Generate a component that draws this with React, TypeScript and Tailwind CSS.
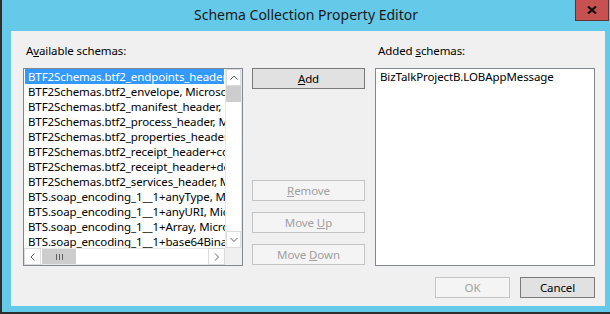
import React from 'react';

const available = [
    "BTF2Schemas.btf2_endpoints_header, Microsoft.XLANGs.BaseTypes",
    "BTF2Schemas.btf2_envelope, Microsoft.XLANGs.BaseTypes",
    "BTF2Schemas.btf2_manifest_header, Microsoft.XLANGs.BaseTypes",
    "BTF2Schemas.btf2_process_header, Microsoft.XLANGs.BaseTypes",
    "BTF2Schemas.btf2_properties_header, Microsoft.XLANGs.BaseTypes",
    "BTF2Schemas.btf2_receipt_header+commitmentReceipt, Microsoft",
    "BTF2Schemas.btf2_receipt_header+deliveryReceipt, Microsoft",
    "BTF2Schemas.btf2_services_header, Microsoft.XLANGs.BaseTypes",
    "BTS.soap_encoding_1__1+anyType, Microsoft.XLANGs.BaseTypes",
    "BTS.soap_encoding_1__1+anyURI, Microsoft.XLANGs.BaseTypes",
    "BTS.soap_encoding_1__1+Array, Microsoft.XLANGs.BaseTypes",
    "BTS.soap_encoding_1__1+base64Binary, Microsoft.XLANGs.BaseTypes",
];

const added = ["BizTalkProjectB.LOBAppMessage"];

function Chevron({dir}: { dir: "up" | "down" | "left" | "right" }) {
    const pts = {
        up: "0.5,4.5 4,1 7.5,4.5",
        down: "0.5,1 4,4.5 7.5,1",
        left: "4.5,0.5 1,4 4.5,7.5",
        right: "1,0.5 4.5,4 1,7.5",
    }[dir];
    const vertical = dir === "up" || dir === "down";
    return (
        <svg width={vertical ? 8 : 6} height={vertical ? 6 : 8} viewBox={vertical ? "0 0 8 6" : "0 0 6 8"}>
            <polyline points={pts} fill="none" stroke="#606060" strokeWidth="1"/>
        </svg>
    );
}

// list rows are wider than the box on purpose, the box clips them like the real control
function ListBox({items, selected, scroll}: { items: string[], selected?: number, scroll?: boolean }) {
    return (
        <div className="flex h-[198px] w-[220px] flex-col border border-[#828790] bg-white">
            <div className="flex min-h-0 flex-1">
                <div className="min-w-0 flex-1 overflow-hidden px-[1px]">
                    {items.map((item, i) => (
                        <div
                            key={item}
                            className={`h-[15px] whitespace-nowrap pl-[3px] leading-[15px] ${i === selected ? "bg-[#3399ff] text-white" : "text-black"}`}
                        >
                            {item}
                        </div>
                    ))}
                </div>
                {scroll && (
                    <div className="flex w-[17px] flex-col border-x border-[#e8e8e8] bg-white">
                        <div className="flex h-[17px] items-center justify-center border border-[#dcdcdc]">
                            <Chevron dir="up"/>
                        </div>
                        <div className="h-[16px] bg-[#cdcdcd]"/>
                        <div className="flex-1"/>
                        <div className="flex h-[17px] items-center justify-center border border-[#dcdcdc]">
                            <Chevron dir="down"/>
                        </div>
                    </div>
                )}
            </div>
            {scroll && (
                <div className="flex h-[17px]">
                    <div className="flex flex-1 items-center border-y border-[#e8e8e8] bg-white">
                        <div className="flex h-[17px] w-[17px] items-center justify-center border border-[#dcdcdc]">
                            <Chevron dir="left"/>
                        </div>
                        <div className="ml-[1px] flex h-[15px] w-[34px] items-center justify-center gap-[2px] bg-[#cdcdcd]">
                            <div className="h-[6px] w-[1px] bg-[#606060]"/>
                            <div className="h-[6px] w-[1px] bg-[#606060]"/>
                            <div className="h-[6px] w-[1px] bg-[#606060]"/>
                        </div>
                        <div className="flex-1"/>
                        <div className="flex h-[17px] w-[17px] items-center justify-center border border-[#dcdcdc]">
                            <Chevron dir="right"/>
                        </div>
                    </div>
                    <div className="w-[17px] bg-[#f0f0f0]"/>
                </div>
            )}
        </div>
    );
}

function Button({children, disabled, width}: { children: React.ReactNode, disabled?: boolean, width: string }) {
    return (
        <div
            className={`flex h-[21px] items-center justify-center border ${width} ${disabled ? "border-[#c4c4c4] bg-[#f4f4f4] text-[#a0a0a0]" : "border-[#7a7a7a] bg-[#e1e1e1] text-black"}`}
        >
            {children}
        </div>
    );
}

export default function App() {
    return (
        <div className="h-[314px] w-[610px] overflow-hidden border-b-2 border-l-2 border-[#2e2e2e] bg-[#65c9ea] text-[11.5px] tracking-[-0.1px] [font-family:'Noto_Sans',sans-serif]">
            <div className="grid h-[31px] grid-cols-[1fr_auto_1fr]">
                <div/>
                <div className="pt-[5px] text-[14px] leading-[20px] tracking-normal text-[#1a1a1a]">Schema Collection Property Editor</div>
                <div className="flex justify-end pr-[1px]">
                    <div className="flex h-[21px] w-[34px] items-center justify-center border border-t-0 border-[#5c3434] bg-[#c75050]">
                        <svg width="10" height="8" viewBox="0 0 10 8">
                            <path d="M1 0.5 L9 7.5 M9 0.5 L1 7.5" stroke="#111" strokeWidth="2.2"/>
                        </svg>
                    </div>
                </div>
            </div>
            <div className="ml-[9px] flex h-[275px] w-[594px] flex-col bg-[#f0f0f0]">
                <div className="flex pl-[12px]">
                    <div className="flex flex-col">
                        <div className="h-[37px] pl-[3px] pt-[12px] leading-[16px]">
                            A<u>v</u>ailable schemas:
                        </div>
                        <ListBox items={available} selected={0} scroll/>
                    </div>
                    <div className="ml-[9px] flex w-[113px] flex-col pt-[37px]">
                        <Button width="w-[113px]"><span><u>A</u>dd</span></Button>
                        <div className="h-[91px]"/>
                        <Button width="w-[113px]" disabled><span><u>R</u>emove</span></Button>
                        <div className="h-[11px]"/>
                        <Button width="w-[113px]" disabled><span>Move <u>U</u>p</span></Button>
                        <div className="h-[11px]"/>
                        <Button width="w-[113px]" disabled><span>Move <u>D</u>own</span></Button>
                    </div>
                    <div className="ml-[10px] flex flex-col">
                        <div className="h-[37px] pl-[3px] pt-[12px] leading-[16px]">
                            Added <u>s</u>chemas:
                        </div>
                        <ListBox items={added}/>
                    </div>
                </div>
                <div className="mt-[11px] flex justify-end gap-[10px] pr-[10px]">
                    <Button width="w-[75px]" disabled>OK</Button>
                    <Button width="w-[75px]">Cancel</Button>
                </div>
            </div>
        </div>
    );
}
